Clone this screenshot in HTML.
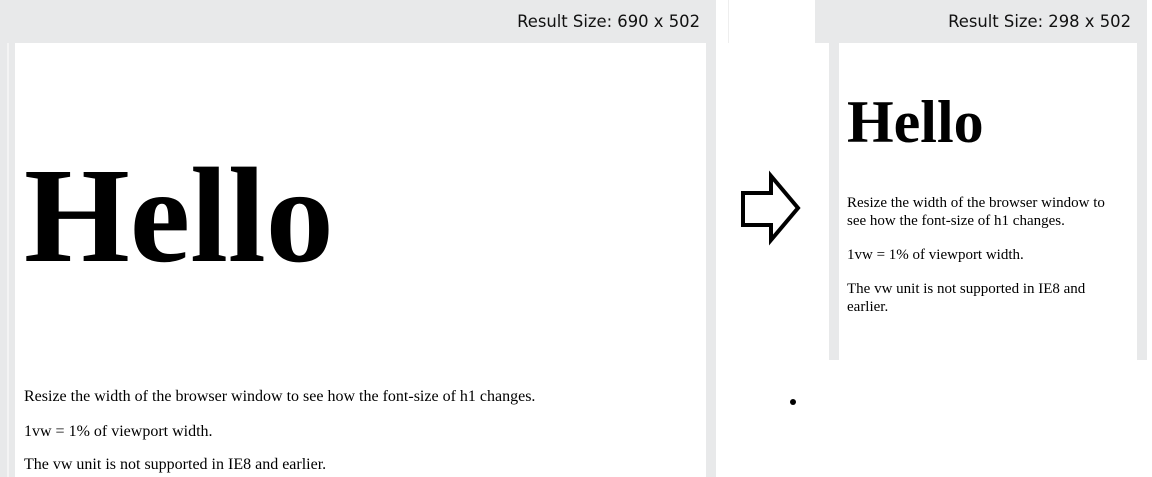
<!DOCTYPE html>
<html><head><meta charset="utf-8"><style>
body{margin:0;width:1152px;height:477px;position:relative;overflow:hidden;background:#fff;font-family:"Liberation Serif",serif;}
div{position:absolute;}
.bar{background:#e8e9ea;}
.hdr{font-family:"DejaVu Sans",sans-serif;font-size:16.4px;color:#111;white-space:nowrap;}
.t{white-space:nowrap;color:#000;}
</style></head><body>
<div class="bar" style="left:0;top:0;width:716px;height:43px"></div>
<div class="hdr" style="right:452px;top:12px">Result Size: 690 x 502</div>
<div class="bar" style="left:0;top:43px;width:15px;height:434px"></div>
<div style="left:7px;top:43px;width:2px;height:434px;background:#f4f4f4"></div>
<div class="bar" style="left:706px;top:43px;width:10px;height:434px"></div>
<div style="left:728px;top:0;width:1px;height:43px;background:#eee"></div>
<div class="t" style="left:24px;top:136px;font-size:136px;font-weight:bold;line-height:160px">Hello</div>
<div class="t" style="left:24px;top:388px;font-size:16px">Resize the width of the browser window to see how the font-size of h1 changes.</div>
<div class="t" style="left:24px;top:423px;font-size:16px">1vw = 1% of viewport width.</div>
<div class="t" style="left:24px;top:456px;font-size:16px">The vw unit is not supported in IE8 and earlier.</div>

<svg style="position:absolute;left:0;top:0" width="1152" height="477"><polygon points="743,193 771,193 771,176 798,208 771,240 771,225 743,225" fill="none" stroke="#000" stroke-width="4" stroke-linejoin="miter"/><circle cx="793" cy="402" r="3" fill="#000"/></svg>

<div class="bar" style="left:815px;top:0;width:332px;height:43px"></div>
<div class="hdr" style="right:21px;top:12px">Result Size: 298 x 502</div>
<div class="bar" style="left:829px;top:43px;width:10px;height:317px"></div>
<div class="bar" style="left:1137px;top:43px;width:10px;height:317px"></div>
<div class="t" style="left:847px;top:87px;font-size:60px;font-weight:bold;line-height:70px">Hello</div>
<div class="t" style="left:847px;top:194px;font-size:15px;line-height:18px;white-space:normal;width:278px">Resize the width of the browser window to see how the font-size of h1 changes.</div>
<div class="t" style="left:847px;top:246px;font-size:15px;line-height:18px">1vw = 1% of viewport width.</div>
<div class="t" style="left:847px;top:280px;font-size:15px;line-height:18px;white-space:normal;width:262px">The vw unit is not supported in IE8 and earlier.</div>
</body></html>
